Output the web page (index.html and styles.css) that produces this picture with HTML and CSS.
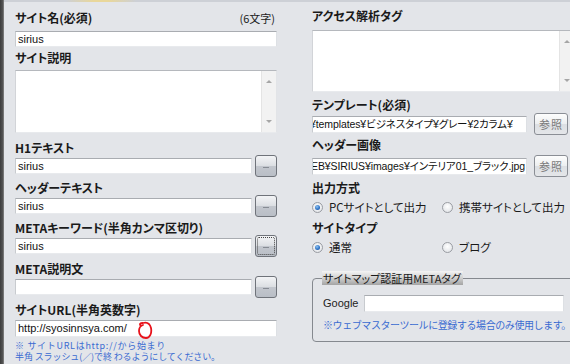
FILE: index.html
```html
<!DOCTYPE html>
<html lang="ja">
<head>
<meta charset="utf-8">
<title>サイト設定</title>
<link rel="stylesheet" href="styles.css">
</head>
<body>
<div class="page">
  <div class="edge"></div>
  <div class="main">
    <div class="topbar"><span class="tabglow"></span></div>
    <div class="cols">
      <div class="col left">
        <div class="label-row"><span class="label">サイト名(必須)</span><span class="count">(6文字)</span></div>
        <div class="field wide m5">sirius</div>
        <div class="label m3">サイト説明</div>
        <div class="textarea ta-left m4"><div class="sb"><span class="arr up"></span><span class="arr down"></span></div></div>

        <div class="label m7">H1テキスト</div>
        <div class="row m2"><div class="field narrow">sirius</div><button class="dots"><span></span></button></div>

        <div class="label m6">ヘッダーテキスト</div>
        <div class="row m2"><div class="field narrow">sirius</div><button class="dots"><span></span></button></div>

        <div class="label m6">METAキーワード(半角カンマ区切り)</div>
        <div class="row m2"><div class="field narrow">sirius</div><button class="dots focus"><span></span></button></div>

        <div class="label m7">META説明文</div>
        <div class="row m2"><div class="field narrow"></div><button class="dots"><span></span></button></div>

        <div class="label m7">サイトURL(半角英数字)</div>
        <div class="field wide url m2">http://syosinnsya.com/
          <svg class="mark" width="18" height="20" viewBox="0 0 18 20"><path d="M5 5 C3 3 4 2 7 2 C11 1 14 3 15 7 C16 12 14 17 10 17 C6 17 3 14 3 10 C3 7 4 5 7 4" fill="none" stroke="#e8121b" stroke-width="1.8" stroke-linecap="round"/></svg>
        </div>
        <div class="note m3"><span class="n1">※ サイトURLはhttp://から始まり</span><span class="n2">半角 スラッシュ(／)で終 わるようにしてください。</span></div>
      </div>

      <div class="col right">
        <div class="label">アクセス解析タグ</div>
        <div class="textarea ta-right m6"><div class="sb"><span class="arr up"></span><span class="arr down"></span></div></div>

        <div class="label m5">テンプレート(必須)</div>
        <div class="row rrow"><div class="field path"><span class="clip">¥templates¥ビジネスタイプ¥グレー¥2カラム¥</span></div><button class="ref">参照</button></div>

        <div class="label m2">ヘッダー画像</div>
        <div class="row rrow m2"><div class="field path"><span class="clip2">EB¥SIRIUS¥images¥インテリア01_ブラック.jpg</span></div><button class="ref">参照</button></div>

        <div class="label m3">出力方式</div>
        <div class="radios m3">
          <label class="opt"><span class="radio on"></span><span class="rt">PCサイトとして出力</span></label>
          <label class="opt"><span class="radio"></span><span class="rt">携帯サイトとして出力</span></label>
        </div>

        <div class="label m5">サイトタイプ</div>
        <div class="radios m3">
          <label class="opt"><span class="radio on"></span><span class="rt">通常</span></label>
          <label class="opt"><span class="radio"></span><span class="rt">ブログ</span></label>
        </div>

        <fieldset class="box">
          <legend>サイトマップ認証用METAタグ</legend>
          <div class="grow"><span class="glabel">Google</span><div class="field gfield"></div></div>
          <div class="note2">※ウェブマスターツールに登録する場合のみ使用します。</div>
        </fieldset>
      </div>
    </div>
  </div>
</div>
</body>
</html>
```

FILE: styles.css
```css
* { box-sizing: border-box; }
html, body { margin: 0; padding: 0; }
body {
  width: 570px; height: 364px; overflow: hidden;
  background: #e3e5e9;
  font-family: "Noto Sans CJK JP", sans-serif;
  color: #1c1c1c;
}
.page { display: flex; height: 364px; }
.edge {
  width: 4px; flex: none;
  background: linear-gradient(to right, #3c3c3c, #555 70%, #8d8d8d);
}
.main { flex: 1; display: flex; flex-direction: column; min-width: 0; }
.topbar { height: 2px; background: #cdd0d6; position: relative; flex: none; }
.tabglow {
  position: absolute; left: 62px; top: 0; width: 70px; height: 2px;
  background: linear-gradient(to right, rgba(232,214,150,0), #e9d79a 40%, #e9d79a 60%, rgba(232,214,150,0));
}
.cols { display: flex; flex: 1; min-height: 0; }
.col { display: flex; flex-direction: column; }
.left { width: 286px; flex: none; padding: 8px 0 0 11px; }
.right { flex: 1; padding: 6px 0 0 22px; min-width: 0; }

.m2 { margin-top: 2px; } .m3 { margin-top: 3px; } .m4 { margin-top: 4px; }
.m5 { margin-top: 5px; } .m6 { margin-top: 6px; } .m7 { margin-top: 7px; }

.label {
  font-size: 12px; font-weight: 700; line-height: 16px; height: 16px;
  white-space: nowrap; font-feature-settings: "palt" 1; color: #1a1a1a;
}
.label-row { display: flex; justify-content: space-between; width: 262px; }
.count { font-size: 11px; line-height: 16px; padding-right: 2px; font-feature-settings: "palt" 1; }

.field {
  background: #fff; height: 16px;
  border: 1px solid; border-color: #a9acb1 #dde0e4 #e8eaed #c8cbcf;
  padding: 0 2px;
  font: 11px/14px "Liberation Sans", "Noto Sans CJK JP", sans-serif;
  color: #111; white-space: nowrap; overflow: hidden;
}
.wide { width: 262px; }
.narrow { width: 237px; }
.url { height: 17px; line-height: 15px; position: relative; overflow: visible; }
.mark { position: absolute; left: 120px; top: 0px; }

.row { display: flex; align-items: center; height: 16px; }
.dots {
  width: 22px; height: 22px; margin: -3px 0 -3px 3px; padding: 0;
  border: 1px solid #6f737a; border-radius: 3px;
  background: linear-gradient(#f3f4f6, #dcdfe3 48%, #c2c6cd 52%, #b9bec6);
  display: flex; align-items: center; justify-content: center; position: relative;
}
.dots span { width: 6px; height: 1px; background: #868b93; margin-top: 2px; }
.dots.focus::after {
  content: ""; position: absolute; inset: 1px; border: 1px dotted #444; border-radius: 2px;
}

.textarea {
  background: #fff; display: flex; justify-content: flex-end;
  border: 1px solid; border-color: #b5b8bd #e2e4e7 #e8eaed #d2d4d8;
}
.ta-left { width: 262px; height: 63px; }
.ta-right { width: 263px; height: 62px; }
.sb {
  width: 15px; height: 100%; background: #f2f2f2; border-left: 1px solid #e4e4e4;
  display: flex; flex-direction: column; justify-content: space-between; align-items: center;
  padding: 9px 0;
}
.arr { width: 0; height: 0; border-left: 3px solid transparent; border-right: 3px solid transparent; }
.arr.up { border-bottom: 3px solid #a6a6a6; }
.arr.down { border-top: 3px solid #a6a6a6; }

.rrow { height: 22px; }
.path {
  width: 215px; height: 17px; line-height: 15px; padding: 0;
  font-size: 10.5px; font-feature-settings: "palt" 1; letter-spacing: -0.1px;
}
.clip { display: inline-block; margin-left: -3px; }
.clip2 { display: inline-block; margin-left: -2px; }
.ref {
  width: 34px; height: 22px; margin: 0 0 0 7px; padding: 0; flex: none;
  border: 1px solid #8a8e95; border-radius: 3px;
  background: linear-gradient(#fdfdfd, #eceef0 50%, #dcdfe3 52%, #e4e6e9);
  font: 11px/20px "Noto Sans CJK JP", sans-serif; color: #7a7a7a; letter-spacing: 1px;
}

.radios { display: flex; height: 16px; align-items: center; }
.opt { display: inline-flex; align-items: center; width: 130px; flex: none; white-space: nowrap; }
.radio {
  width: 11px; height: 11px; border-radius: 50%; flex: none;
  border: 1px solid #9a9da3;
  background: radial-gradient(circle at 50% 40%, #ffffff, #e6e8eb 70%, #d4d7db);
  display: flex; align-items: center; justify-content: center;
}
.radio.on::after {
  content: ""; width: 5px; height: 5px; border-radius: 50%;
  background: radial-gradient(circle at 40% 35%, #8fc3f3, #2a6fc2 60%, #1b4f94);
}
.rt { margin-left: 6px; font-size: 11.5px; line-height: 16px; font-feature-settings: "palt" 1; color: #1a1a1a; }

.box {
  margin: 16px 0 0 0; padding: 0 10px 10px 10px;
  width: 290px; height: 71px;
  border: 1px solid #85898f; border-radius: 4px;
}
.box legend {
  padding: 0 2px 0 1px; margin-left: -1px;
  font-size: 11px; line-height: 14px; height: 14px;
  font-feature-settings: "palt" 1; color: #1a1a1a;
  background: linear-gradient(#f4f4f4, #d4d4d4 45%, #a4a4a4);
}
.grow { display: flex; align-items: center; margin-top: 10px; }
.glabel { width: 41px; flex: none; font: 11px/17px "Liberation Sans", sans-serif; color: #222; }
.gfield { width: 200px; height: 17px; }

.note { display: flex; flex-direction: column; color: #3a6bd1; white-space: nowrap; }
.n1 { font-size: 9px; line-height: 11px; height: 11px; letter-spacing: 0.7px; }
.n2 { font-size: 9px; line-height: 11px; height: 11px; letter-spacing: -0.1px; }
.note2 {
  margin-top: 7px; font-size: 10px; line-height: 12px; color: #3a6bd1; white-space: nowrap;
  letter-spacing: -0.42px;
}
```
